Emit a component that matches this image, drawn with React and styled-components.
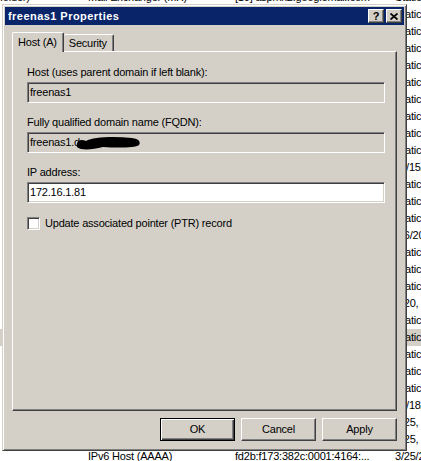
import React from 'react';
import styled, { createGlobalStyle } from 'styled-components';

const Global = createGlobalStyle`
  html, body { margin: 0; padding: 0; background: #fff; }
  body {
    width: 421px; height: 461px; overflow: hidden;
    font-family: "Liberation Sans", Arial, sans-serif;
    font-size: 11px; color: #000;
    letter-spacing: -0.2px;
  }
  * { box-sizing: border-box; }
`;

const Screen = styled.div`
  position: relative;
  width: 421px;
  height: 461px;
  overflow: hidden;
  background: #fff;
`;

const List = styled.div`
  margin-top: -11px;
`;

const Row = styled.div`
  display: grid;
  grid-template-columns: 88px 147px 160px 1fr;
  height: 17px;
  align-items: center;
  white-space: nowrap;
  background: ${p => (p.$selected ? '#d4d0c8' : 'transparent')};
`;

const Cell = styled.div`
  overflow: ${p => (p.$last ? 'visible' : 'hidden')};
  line-height: 13px;
`;

const Window = styled.div`
  position: absolute;
  left: 2px;
  top: 4px;
  width: 405px;
  height: 447px;
  display: flex;
  flex-direction: column;
  background: #d4d0c8;
  border: 1px solid;
  border-color: #d4d0c8 #404040 #404040 #d4d0c8;
  box-shadow: inset 1px 1px #fff, inset -1px -1px #808080;
  padding: 2px;
`;

const TitleBar = styled.div`
  height: 18px;
  flex: none;
  display: flex;
  align-items: center;
  padding: 0 2px 0 3px;
  background: #0a246a;
  color: #fff;
  font-weight: bold;
  font-size: 11px;
`;

const TitleText = styled.span`
  line-height: 13px;
  letter-spacing: 0.45px;
`;

const CaptionButtons = styled.div`
  margin-left: auto;
  display: flex;
  gap: 2px;
`;

const CaptionButton = styled.div`
  width: 16px;
  height: 14px;
  display: flex;
  align-items: center;
  justify-content: center;
  background: #d4d0c8;
  border: 1px solid;
  border-color: #fff #404040 #404040 #fff;
  box-shadow: inset -1px -1px #808080;
  color: #000;
  font-weight: bold;
  font-size: 11px;
  line-height: 11px;
  letter-spacing: 0;
`;

const Body = styled.div`
  flex: 1;
  display: flex;
  flex-direction: column;
  padding: 7px 7px 7px 7px;
`;

const TabRow = styled.div`
  position: relative;
  z-index: 2;
  height: 19px;
  display: flex;
  align-items: flex-start;
`;

const Tab = styled.div`
  height: ${p => (p.$active ? '20px' : '17px')};
  margin-top: ${p => (p.$active ? '0' : '2px')};
  padding: ${p => (p.$active ? '0 6px 0 5px' : '0 6px 0 5px')};
  display: flex;
  align-items: center;
  background: #d4d0c8;
  border-top: 1px solid #fff;
  border-left: ${p => (p.$active ? '1px solid #fff' : 'none')};
  border-right: 1px solid #404040;
  box-shadow: inset -1px 0 #808080;
  border-radius: 2px 2px 0 0;
  line-height: 13px;
`;

const Panel = styled.div`
  flex: 1;
  display: flex;
  flex-direction: column;
  padding: 14px 11px 0 14px;
  border: 1px solid;
  border-color: #fff #404040 #404040 #fff;
  box-shadow: inset -1px -1px #808080;
`;

const Field = styled.div`
  display: flex;
  flex-direction: column;
  margin-bottom: 13px;
`;

const Label = styled.div`
  line-height: 13px;
  margin-bottom: 3px;
`;

const TextBox = styled.div`
  height: 21px;
  display: flex;
  align-items: center;
  padding: 0 2px;
  background: ${p => (p.$disabled ? '#d4d0c8' : '#fff')};
  border: 1px solid;
  border-color: #808080 #fff #fff #808080;
  box-shadow: inset 1px 1px #404040, inset -1px -1px #d4d0c8;
  white-space: nowrap;
  line-height: 13px;
`;

const Blob = styled.svg`
  margin-left: -5px;
  flex: none;
`;

const CheckRow = styled.label`
  display: flex;
  align-items: center;
  gap: 5px;
  margin-top: 1px;
  line-height: 13px;
`;

const CheckBox = styled.span`
  width: 13px;
  height: 13px;
  flex: none;
  background: #fff;
  border: 1px solid;
  border-color: #808080 #fff #fff #808080;
  box-shadow: inset 1px 1px #404040, inset -1px -1px #d4d0c8;
`;

const ButtonRow = styled.div`
  display: flex;
  justify-content: flex-end;
  gap: 6px;
  margin-top: 7px;
`;

const Button = styled.div`
  width: 75px;
  height: 23px;
  display: flex;
  align-items: center;
  justify-content: center;
  background: #d4d0c8;
  border: 1px solid;
  border-color: ${p => (p.$default ? '#000' : '#fff #404040 #404040 #fff')};
  box-shadow: ${p =>
    p.$default
      ? 'inset 1px 1px #fff, inset -1px -1px #404040, inset -2px -2px #808080'
      : 'inset -1px -1px #808080'};
  line-height: 13px;
`;

const rows = [
  ['folder)', 'Mail Exchanger (MX)', '[10] aspmx2.googlemail.com', 'Static'],
  ...Array.from({ length: 9 }, () => ['', '', '', 'Static']),
  ['', '', '', '11/15/2014 3:00:00 PM'],
  ['', '', '', 'Static'],
  ['', '', '', 'Static'],
  ['', '', '', 'Static'],
  ['', '', '', '4/6/2015 2:00:00 PM'],
  ['', '', '', 'Static'],
  ['', '', '', 'Static'],
  ['', '', '', 'Static'],
  ['', '', '', '3/20, 2015 9:00:00 AM'],
  ['', '', '', 'Static'],
  ['', '', '', 'Static', true],
  ['', '', '', 'Static'],
  ['', '', '', 'Static'],
  ['', '', '', 'Static'],
  ['', '', '', '11/18/2014 4:00:00 PM'],
  ['', '', '', '3/25, 2015 8:00:00 AM'],
  ['', '', '', '3/25, 2015 8:00:00 AM'],
  ['', 'IPv6 Host (AAAA)', 'fd2b:f173:382c:0001:4164:...', '3/25/2015 8:00:00 AM'],
];

export default function App() {
  return (
    <>
      <Global />
      <Screen>
        <List>
          {rows.map((r, i) => (
            <Row key={i} $selected={r[4]}>
              <Cell>{r[0]}</Cell>
              <Cell>{r[1]}</Cell>
              <Cell>{r[2]}</Cell>
              <Cell $last>{r[3]}</Cell>
            </Row>
          ))}
        </List>

        <Window>
          <TitleBar>
            <TitleText>freenas1 Properties</TitleText>
            <CaptionButtons>
              <CaptionButton>?</CaptionButton>
              <CaptionButton>
                <svg width="8" height="7" viewBox="0 0 8 7">
                  <path d="M0.5 0.5 L7.5 6.5 M7.5 0.5 L0.5 6.5" stroke="#000" strokeWidth="1.7" />
                </svg>
              </CaptionButton>
            </CaptionButtons>
          </TitleBar>
          <Body>
            <TabRow>
              <Tab $active>Host (A)</Tab>
              <Tab>Security</Tab>
            </TabRow>
            <Panel>
              <Field>
                <Label>Host (uses parent domain if left blank):</Label>
                <TextBox $disabled>freenas1</TextBox>
              </Field>
              <Field>
                <Label>Fully qualified domain name (FQDN):</Label>
                <TextBox $disabled>
                  freenas1.d
                  <Blob width="66" height="16" viewBox="0 0 66 16">
                    <path
                      d="M2 9 C2 5 7 4 11 6 C18 2 38 1 57 3 C64 4 66 7 64 10 C60 13 42 13 28 12 C20 14 12 15 6 14 C2 13 1 11 2 9 Z"
                      fill="#000"
                    />
                  </Blob>
                </TextBox>
              </Field>
              <Field>
                <Label>IP address:</Label>
                <TextBox>172.16.1.81</TextBox>
              </Field>
              <CheckRow>
                <CheckBox />
                Update associated pointer (PTR) record
              </CheckRow>
            </Panel>
            <ButtonRow>
              <Button $default>OK</Button>
              <Button>Cancel</Button>
              <Button>Apply</Button>
            </ButtonRow>
          </Body>
        </Window>
      </Screen>
    </>
  );
}
